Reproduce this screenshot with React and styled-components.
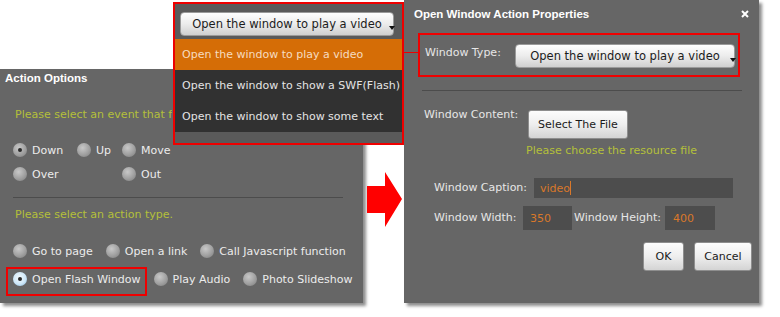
import styled, { createGlobalStyle } from "styled-components";

// Базовые стили страницы
const Global = createGlobalStyle`
  html, body {
    margin: 0;
    padding: 0;
    background: #fff;
  }
  body {
    font-family: "DejaVu Sans", Tahoma, sans-serif;
    font-size: 11px;
  }
`;

// Холст со всеми окнами
const Canvas = styled.div`
  position: relative;
  width: 780px;
  height: 317px;
  display: flex;
  align-items: flex-start;
  background: #fff;
  overflow: hidden;
`;

// Окно
const Panel = styled.div`
  flex: none;
  box-sizing: border-box;
  background: #666;
  color: #ececec;
  box-shadow: 3px 3px 3px rgba(0, 0, 0, 0.45);
`;

const LeftPanel = styled(Panel)`
  margin-top: 69px;
  width: 363px;
  height: 234px;
`;

const RightPanel = styled(Panel)`
  width: 355px;
  height: 303px;
`;

const Header = styled.div`
  display: flex;
  align-items: center;
  justify-content: space-between;
  height: ${(p) => p.$h || 18}px;
  padding: 0 ${(p) => p.$px || 5}px 0 ${(p) => p.$pl || 5}px;
`;

const Title = styled.div`
  font-family: "Liberation Sans", Arial, sans-serif;
  font-weight: bold;
  font-size: 11.5px;
  color: #fff;
`;

const Close = styled.svg`
  display: block;
`;

const Prompt = styled.div`
  color: #b4c03a;
  line-height: 14px;
  margin: ${(p) => p.$mt || 0}px 0 0 ${(p) => p.$ml || 15}px;
  white-space: nowrap;
  overflow: hidden;
  max-width: ${(p) => (p.$clip ? `${p.$clip}px` : "none")};
`;

// Радио-кнопки
const EventGrid = styled.div`
  display: grid;
  grid-template-columns: 64px 45px auto;
  grid-auto-rows: 24px;
  align-items: center;
  margin-top: 16px;
  padding-left: 13px;
`;

const ActionRow = styled.div`
  display: flex;
  align-items: center;
  gap: 13px;
  height: 28px;
  padding-left: 13px;
  margin-top: ${(p) => p.$mt || 0}px;
`;

const Option = styled.label`
  position: relative;
  display: flex;
  align-items: center;
  gap: 5px;
  white-space: nowrap;
  color: #ececec;

  ${(p) =>
    p.$marked &&
    `
    &::after {
      content: "";
      position: absolute;
      left: -7px;
      right: -6px;
      top: -5px;
      bottom: -10px;
      border: 2px solid #e00;
    }
  `}
`;

const Dot = styled.span`
  position: relative;
  flex: none;
  width: 14px;
  height: 14px;
  border-radius: 50%;
  box-sizing: border-box;
  background: ${(p) =>
    p.$focus
      ? "radial-gradient(circle at 45% 40%, #f4fbff, #cfe7f7 55%, #7fb4dc)"
      : "radial-gradient(circle at 40% 35%, #c8c8c8, #a0a0a0 55%, #7a7a7a)"};

  ${(p) =>
    p.$on &&
    `
    &::after {
      content: "";
      position: absolute;
      left: 5px;
      top: 5px;
      width: 4px;
      height: 4px;
      border-radius: 50%;
      background: #2a2a2a;
    }
  `}
`;

const Radio = ({ label, on, focus, marked }) => (
  <Option $marked={marked}>
    <Dot $on={on} $focus={focus} />
    {label}
  </Option>
);

const Rule = styled.div`
  height: 1px;
  background: #4c4c4c;
  margin: ${(p) => p.$mt}px 0 0 ${(p) => p.$ml}px;
  width: ${(p) => p.$w}px;
`;

// Промежуток со стрелкой
const Gutter = styled.div`
  flex: none;
  width: 41px;
  padding: 172px 0 0 4px;
  box-sizing: border-box;
`;

// Выпадающий список поверх окон
const Dropdown = styled.div`
  position: absolute;
  left: 173px;
  top: 2px;
  width: 231px;
  height: 143px;
  box-sizing: border-box;
  border: 2px solid #e00;
  background: #5a5a5a;
  display: flex;
  flex-direction: column;
`;

const SelectButton = styled.div`
  position: relative;
  box-sizing: border-box;
  width: ${(p) => p.$w}px;
  height: 24px;
  margin: ${(p) => p.$m || "0"};
  display: flex;
  align-items: center;
  justify-content: center;
  border: 1px solid #9a9a9a;
  border-radius: 4px;
  background: linear-gradient(#fefefe, #ececec 50%, #cfcfcf);
  color: #1c1c1c;
  font-size: 11.5px;
  white-space: nowrap;

  &::after {
    content: "";
    position: absolute;
    right: -2px;
    top: 13px;
    border-left: 3px solid transparent;
    border-right: 3px solid transparent;
    border-top: 4px solid #111;
  }
`;

const Items = styled.div`
  margin-top: 3px;
  background: #313131;
`;

const Item = styled.div`
  height: 31px;
  display: flex;
  align-items: center;
  padding-left: 7px;
  white-space: nowrap;
  background: ${(p) => (p.$active ? "#d56d06" : "transparent")};
  color: ${(p) => (p.$active ? "#f6dcc0" : "#e4e4e4")};
`;

const Connector = styled.div`
  position: absolute;
  left: 404px;
  top: 52px;
  width: 14px;
  height: 1px;
  background: #e00;
`;

// Правое окно
const TypeBox = styled.div`
  box-sizing: border-box;
  width: 322px;
  height: 44px;
  margin: 5px 0 0 14px;
  border: 2px solid #e00;
  display: flex;
  align-items: flex-start;
  padding: 9px 0 0 5px;
`;

const Label = styled.div`
  flex: none;
  width: ${(p) => (p.$w ? `${p.$w}px` : "auto")};
  margin-top: ${(p) => p.$mt || 0}px;
  padding-left: ${(p) => p.$pl || 0}px;
  box-sizing: border-box;
  line-height: 14px;
  color: #e6e6e6;
  white-space: nowrap;
`;

const Row = styled.div`
  display: flex;
  align-items: ${(p) => p.$align || "center"};
  margin: ${(p) => p.$mt || 0}px 0 0 ${(p) => p.$pl || 0}px;
`;

const PushButton = styled.div`
  box-sizing: border-box;
  width: ${(p) => p.$w}px;
  height: ${(p) => p.$h || 29}px;
  display: flex;
  align-items: center;
  justify-content: center;
  border: 1px solid #8e8e8e;
  border-radius: 3px;
  background: linear-gradient(#fdfdfd, #eeeeee 50%, #d4d4d4);
  color: #1a1a1a;
  white-space: nowrap;
`;

const Field = styled.div`
  box-sizing: border-box;
  width: ${(p) => p.$w}px;
  height: ${(p) => p.$h}px;
  display: flex;
  align-items: center;
  padding-left: ${(p) => p.$pl || 6}px;
  background: #4d4d4d;
  color: #d9782a;
`;

const Caret = styled.span`
  display: inline-block;
  width: 1px;
  height: 14px;
  background: #d9782a;
`;

const Actions = styled.div`
  display: flex;
  justify-content: flex-end;
  gap: 10px;
  margin-top: 12px;
  padding-right: 7px;
`;

export default function App() {
  return (
    <Canvas>
      <Global />

      <LeftPanel>
        <Header>
          <Title>Action Options</Title>
        </Header>
        <Prompt $mt={21} $clip={157}>Please select an event that fires the action.</Prompt>
        <EventGrid>
          <Radio label="Down" on />
          <Radio label="Up" />
          <Radio label="Move" />
          <Radio label="Over" />
          <span />
          <Radio label="Out" />
        </EventGrid>
        <Rule $mt={11} $ml={13} $w={330} />
        <Prompt $mt={10}>Please select an action type.</Prompt>
        <ActionRow $mt={15}>
          <Radio label="Go to page" />
          <Radio label="Open a link" />
          <Radio label="Call Javascript function" />
        </ActionRow>
        <ActionRow>
          <Radio label="Open Flash Window" on focus marked />
          <Radio label="Play Audio" />
          <Radio label="Photo Slideshow" />
        </ActionRow>
      </LeftPanel>

      <Gutter>
        <svg width="35" height="56" viewBox="0 0 35 56">
          <polygon points="0,14 18,14 18,0 35,27 18,55 18,41 0,41" fill="#f00" />
        </svg>
      </Gutter>

      <RightPanel>
        <Header $h={28} $pl={10} $px={10}>
          <Title>Open Window Action Properties</Title>
          <Close width="8" height="8" viewBox="0 0 8 8">
            <path d="M1 1L7 7M7 1L1 7" stroke="#fff" strokeWidth="2" />
          </Close>
        </Header>
        <TypeBox>
          <Label $w={90} $mt={2}>Window Type:</Label>
          <SelectButton $w={220}>Open the window to play a video</SelectButton>
        </TypeBox>
        <Rule $mt={13} $ml={18} $w={320} />
        <Row $mt={19} $pl={20} $align="flex-start">
          <Label $w={104} $mt={-2}>Window Content:</Label>
          <PushButton $w={100}>Select The File</PushButton>
        </Row>
        <Prompt $mt={5} $ml={122}>Please choose the resource file</Prompt>
        <Row $mt={20} $pl={30}>
          <Label $w={100}>Window Caption:</Label>
          <Field $w={199} $h={20}>
            video
            <Caret />
          </Field>
        </Row>
        <Row $mt={8} $pl={30}>
          <Label $w={89}>Window Width:</Label>
          <Field $w={49} $h={24} $pl={7}>350</Field>
          <Label $w={93} $pl={2}>Window Height:</Label>
          <Field $w={50} $h={24} $pl={8}>400</Field>
        </Row>
        <Actions>
          <PushButton $w={41}>OK</PushButton>
          <PushButton $w={58}>Cancel</PushButton>
        </Actions>
      </RightPanel>

      <Dropdown>
        <SelectButton $w={214} $m="8px 0 0 5px">
          Open the window to play a video
        </SelectButton>
        <Items>
          <Item $active>Open the window to play a video</Item>
          <Item>Open the window to show a SWF(Flash)</Item>
          <Item>Open the window to show some text</Item>
        </Items>
      </Dropdown>
      <Connector />
    </Canvas>
  );
}
